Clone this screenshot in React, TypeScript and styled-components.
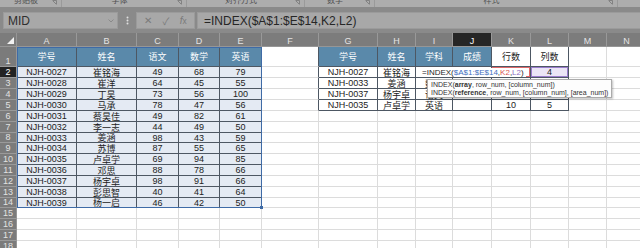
import styled, { createGlobalStyle } from 'styled-components';

const GlobalStyle = createGlobalStyle`
  body {
    margin: 0;
    background: #fff;
    overflow: hidden;
    font-family: "Liberation Sans", "Noto Sans CJK SC", sans-serif;
  }
`;

const COLS = [17, 60, 60, 42, 41, 42, 57, 59, 38, 37, 39, 39, 38, 38, 40];
const LETTERS = 'ABCDEFGHIJKLMN'.split('');
const ROWS = [20, 11, 11, 11, 11, 11, 11, 10, 11, 11, 11, 11, 11, 10, 11, 11, 11, 11];

const HEAD_BLUE = '#5a89aa';
const T1_BG = '#e4eaf3';
const T_LINE = '#4d5763';
const GRID = '#dcdcdc';

const table1 = [
  ['学号', '姓名', '语文', '数学', '英语'],
  ['NJH-0027', '崔铭海', '49', '68', '79'],
  ['NJH-0028', '崔洋', '64', '45', '55'],
  ['NJH-0029', '丁昊', '73', '56', '100'],
  ['NJH-0030', '马承', '78', '47', '56'],
  ['NJH-0031', '蔡昊佳', '49', '82', '61'],
  ['NJH-0032', '李一志', '44', '49', '50'],
  ['NJH-0033', '姜涵', '98', '43', '59'],
  ['NJH-0034', '苏博', '87', '55', '65'],
  ['NJH-0035', '卢卓学', '69', '94', '85'],
  ['NJH-0036', '邓思', '88', '78', '66'],
  ['NJH-0037', '杨宇卓', '98', '91', '66'],
  ['NJH-0038', '彭思智', '40', '41', '64'],
  ['NJH-0039', '杨一启', '46', '42', '50'],
];

const table2 = [
  ['学号', '姓名', '学科', '成绩', '行数', '列数'],
  ['NJH-0027', '崔铭海', '', '', '', '4'],
  ['NJH-0033', '姜涵', '数学', '', '7', '3'],
  ['NJH-0037', '杨宇卓', '语文', '', '12', '2'],
  ['NJH-0035', '卢卓学', '英语', '', '10', '5'],
];

const inT1 = (c: number, r: number) => c >= 1 && c <= 5 && r >= 1 && r <= 14;
const inT2 = (c: number, r: number) => c >= 7 && c <= 12 && r >= 1 && r <= 5;
const inTable = (c: number, r: number) => inT1(c, r) || inT2(c, r);

/* ---------- ribbon + formula bar ---------- */

const Ribbon = styled.div`
  height: 7px;
  background: #adadad;
  display: flex;
  overflow: hidden;
`;

const RibbonGroup = styled.div<{ $w: number }>`
  width: ${(p) => p.$w}px;
  flex: none;
  display: grid;
  grid-template-columns: 1fr auto;
  align-items: start;
  padding-right: 4px;
  box-sizing: border-box;
  border-right: 1px solid #9a9a9a;
`;

const GroupLabel = styled.span`
  font-size: 8px;
  line-height: 8px;
  color: #505050;
  text-align: center;
  transform: translateY(-3px);
`;

const Launcher = styled.svg`
  width: 5px;
  height: 5px;
`;

const FormulaBar = styled.div`
  height: 26px;
  background: #8a8a8a;
  display: flex;
  align-items: flex-start;
  padding: 5px 0 0 3px;
  box-sizing: border-box;
`;

const Box = styled.div`
  height: 17px;
  background: #a8a8a8;
  border: 1px solid #9b9b9b;
  box-sizing: border-box;
  display: flex;
  align-items: center;
`;

const NameBox = styled(Box)`
  width: 115px;
  justify-content: space-between;
  padding: 0 3px 0 4px;
  font-size: 12px;
  color: #2f2f2f;
`;

const Dots = styled.div`
  width: 18px;
  height: 17px;
  display: flex;
  align-items: center;
  justify-content: center;
`;

const FnBox = styled(Box)`
  width: 59px;
  justify-content: space-around;
  padding: 0 2px;
  font-size: 10px;
  color: #7a7a7a;
`;

const FormulaInput = styled(Box)`
  flex: 1;
  margin-left: 2px;
  padding-left: 6px;
  font-size: 12px;
  color: #262626;
  border-right: none;
`;

/* ---------- sheet ---------- */

const Sheet = styled.div`
  position: relative;
  display: grid;
  grid-template-columns: ${COLS.map((w) => `${w}px`).join(' ')};
  grid-template-rows: 14px ${ROWS.map((h) => `${h}px`).join(' ')};
`;

const Corner = styled.div`
  grid-column: 1;
  grid-row: 1;
  background: #7c7c7c;
  border-right: 1px solid #969696;
  border-bottom: 1px solid #969696;
  display: flex;
  align-items: flex-end;
  justify-content: flex-end;
  padding: 0 2px 2px 0;
`;

const ColHead = styled.div<{ $c: number; $active?: boolean }>`
  grid-column: ${(p) => p.$c + 1};
  grid-row: 1;
  background: ${(p) => (p.$active ? '#262626' : '#7c7c7c')};
  color: ${(p) => (p.$active ? '#fff' : '#e4e4e4')};
  border-right: 1px solid #999;
  border-bottom: 1px solid #969696;
  font-size: 9px;
  display: flex;
  align-items: center;
  justify-content: center;
  padding-top: 2px;
  box-sizing: border-box;
`;

const RowHead = styled.div<{ $r: number; $active?: boolean }>`
  grid-column: 1;
  grid-row: ${(p) => p.$r + 1};
  background: ${(p) => (p.$active ? '#232323' : '#7b7b7b')};
  color: ${(p) => (p.$active ? '#fff' : '#e2e2e2')};
  border-right: 1px solid #969696;
  border-bottom: 1px solid #9a9a9a;
  font-size: 9px;
  display: flex;
  align-items: flex-end;
  justify-content: center;
  line-height: 10px;
`;

const Cell = styled.div<{
  $c: number;
  $r: number;
  $span?: number;
  $bg?: string;
  $rb?: string;
  $bb?: string;
  $color?: string;
  $ring?: string;
}>`
  grid-column: ${(p) => p.$c + 1} / span ${(p) => p.$span ?? 1};
  grid-row: ${(p) => p.$r + 1};
  background: ${(p) => p.$bg ?? '#fff'};
  border-right: 1px solid ${(p) => p.$rb ?? GRID};
  border-bottom: 1px solid ${(p) => p.$bb ?? GRID};
  box-shadow: ${(p) => (p.$ring ? `inset 0 0 0 1px ${p.$ring}` : 'none')};
  color: ${(p) => p.$color ?? '#222'};
  font-size: 9px;
  display: flex;
  align-items: center;
  justify-content: center;
  white-space: nowrap;
  min-width: 0;
  overflow: hidden;
`;

const EditCell = styled(Cell)`
  justify-content: flex-start;
  padding-left: 6px;
  overflow: visible;
  position: relative;
  z-index: 2;
`;

const EditText = styled.span`
  background: #fff;
  font-size: 8px;
  line-height: 9px;
  padding-right: 2px;
  color: #262626;
`;

const Ref = styled.span<{ $color: string }>`
  color: ${(p) => p.$color};
`;

const RangeMark = styled.div`
  grid-column: 2 / 7;
  grid-row: 2 / 16;
  border: 1px solid #3f6ba6;
  pointer-events: none;
  position: relative;
  z-index: 1;
  &::after {
    content: '';
    position: absolute;
    right: -2px;
    bottom: -2px;
    width: 3px;
    height: 3px;
    background: #3f6ba6;
  }
`;

const Tip = styled.div`
  position: absolute;
  left: 427px;
  top: 46px;
  z-index: 5;
  background: #fdfdfd;
  border: 1px solid #ababab;
  box-shadow: 1px 1px 2px rgba(0, 0, 0, 0.25);
  padding: 1px 3px 0;
  font-size: 7px;
  line-height: 8px;
  color: #333;
  white-space: nowrap;
`;

const ribbonGroups = [
  { w: 62, label: '剪贴板' },
  { w: 125, label: '字体' },
  { w: 118, label: '对齐方式' },
  { w: 70, label: '数字' },
  { w: 243, label: '样式' },
];

function cellFor(c: number, r: number) {
  let text = '';
  let bg = '#fff';
  let color = '#222';
  let ring: string | undefined;
  if (inT1(c, r)) {
    text = table1[r - 1][c - 1];
    bg = r === 1 ? HEAD_BLUE : T1_BG;
    color = r === 1 ? '#fff' : '#222';
  } else if (inT2(c, r)) {
    text = table2[r - 1][c - 7];
    const blueHead = r === 1 && c <= 10;
    bg = blueHead ? HEAD_BLUE : '#fff';
    color = blueHead ? '#fff' : '#222';
    if (c === 11 && r === 2) ring = '#e06a6a';
    if (c === 12 && r === 2) {
      ring = '#9a7dcc';
      bg = '#ebe5f6';
    }
  }
  const rb = inTable(c, r) || inTable(c + 1, r) ? T_LINE : GRID;
  const bb = inTable(c, r) || inTable(c, r + 1) ? T_LINE : GRID;
  return { text, bg, color, ring, rb, bb };
}

export default function App() {
  const cells = [];
  for (let r = 1; r <= ROWS.length; r++) {
    for (let c = 1; c <= LETTERS.length; c++) {
      if (r === 2 && c === 10) continue;
      if (r === 2 && c === 9) {
        cells.push(
          <EditCell key={`${c}-${r}`} $c={9} $r={2} $span={2} $rb={T_LINE} $bb={T_LINE}>
            <EditText>
              =INDEX(<Ref $color="#4470c0">$A$1:$E$14</Ref>,<Ref $color="#d9534f">K2</Ref>,
              <Ref $color="#8d6cc4">L2</Ref>)
            </EditText>
          </EditCell>,
        );
        continue;
      }
      const s = cellFor(c, r);
      cells.push(
        <Cell
          key={`${c}-${r}`}
          $c={c}
          $r={r}
          $bg={s.bg}
          $color={s.color}
          $rb={s.rb}
          $bb={s.bb}
          $ring={s.ring}
        >
          {s.text}
        </Cell>,
      );
    }
  }

  return (
    <>
      <GlobalStyle />
      <Ribbon>
        {ribbonGroups.map((g) => (
          <RibbonGroup key={g.label} $w={g.w}>
            <GroupLabel>{g.label}</GroupLabel>
            <Launcher viewBox="0 0 5 5">
              <path d="M0.5 0.5h4v4M1 1l3 3" stroke="#777" strokeWidth="0.8" fill="none" />
            </Launcher>
          </RibbonGroup>
        ))}
      </Ribbon>
      <FormulaBar>
        <NameBox>
          MID
          <svg width="6" height="4" viewBox="0 0 6 4">
            <path d="M0.5 0.5L3 3l2.5-2.5" stroke="#8a8a8a" strokeWidth="1" fill="none" />
          </svg>
        </NameBox>
        <Dots>
          <svg width="3" height="9" viewBox="0 0 3 9">
            <circle cx="1.5" cy="1.5" r="1" fill="#e0e0e0" />
            <circle cx="1.5" cy="4.5" r="1" fill="#e0e0e0" />
            <circle cx="1.5" cy="7.5" r="1" fill="#e0e0e0" />
          </svg>
        </Dots>
        <FnBox>
          <span>✕</span>
          <span>✓</span>
          <span>
            <i>f</i>
            <small>x</small>
          </span>
        </FnBox>
        <FormulaInput>=INDEX($A$1:$E$14,K2,L2)</FormulaInput>
      </FormulaBar>
      <Sheet>
        <Corner>
          <svg width="7" height="7" viewBox="0 0 7 7">
            <path d="M7 0V7H0Z" fill="#f2f2f2" />
          </svg>
        </Corner>
        {LETTERS.map((l, i) => (
          <ColHead key={l} $c={i + 1} $active={l === 'J'}>
            {l}
          </ColHead>
        ))}
        {ROWS.map((_, i) => (
          <RowHead key={i} $r={i + 1} $active={i === 1}>
            {i + 1}
          </RowHead>
        ))}
        {cells}
        <RangeMark />
        <Tip>
          <div>
            INDEX(<b>array</b>, row_num, [column_num])
          </div>
          <div>
            INDEX(<b>reference</b>, row_num, [column_num], [area_num])
          </div>
        </Tip>
      </Sheet>
    </>
  );
}
